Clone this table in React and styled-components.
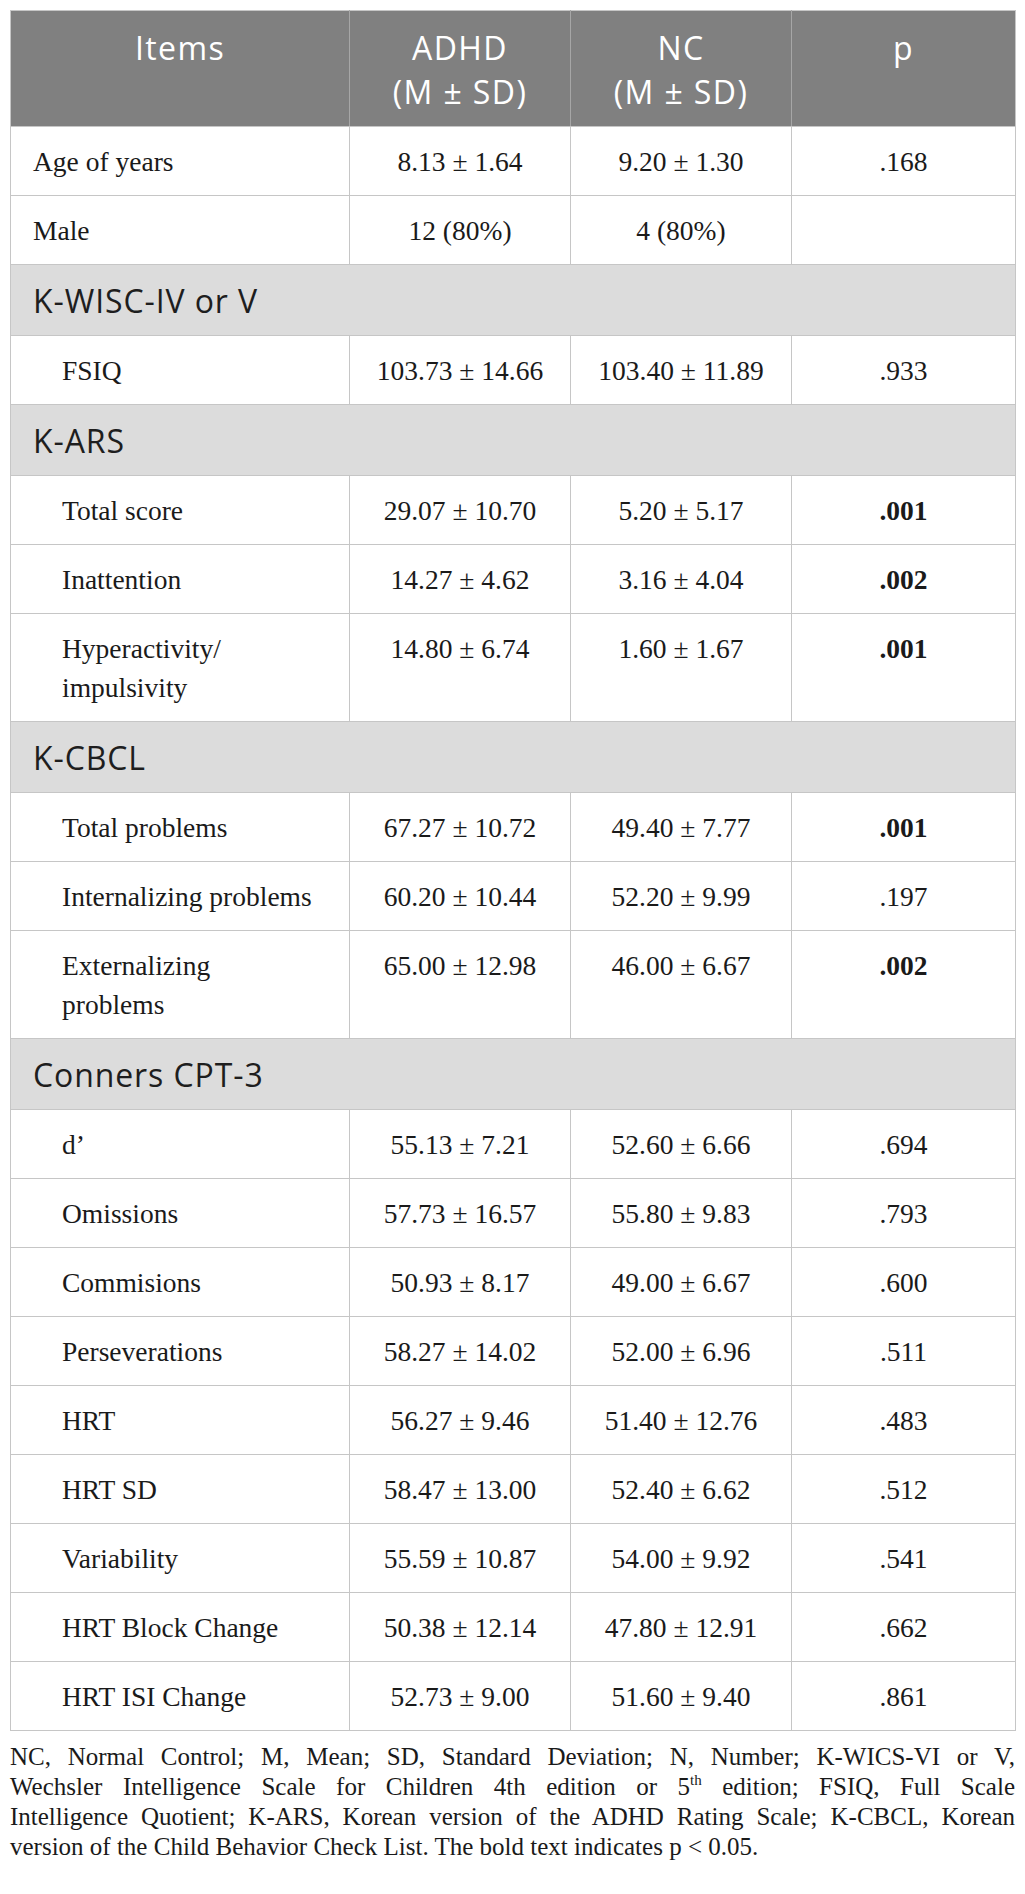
import React from 'react';
import styled, { createGlobalStyle } from 'styled-components';

const GlobalStyle = createGlobalStyle`
  html, body {
    margin: 0;
    padding: 0;
    background: #ffffff;
  }
`;

const Page = styled.div`
  padding: 10px 10px 20px 10px;
  box-sizing: border-box;
  width: 1025px;
`;

const Table = styled.table`
  width: 1005px;
  border-collapse: collapse;
  table-layout: fixed;
  border: 1px solid #c6c6c6;
`;

const HeadCell = styled.th`
  background: #808080;
  color: #ffffff;
  font-family: "Open Sans", "Noto Sans", sans-serif;
  font-weight: 400;
  font-size: 32px;
  letter-spacing: 1.4px;
  line-height: 44px;
  text-align: center;
  vertical-align: top;
  padding: 15px 4px 12px 4px;
  border-left: 1px solid #a6a6a6;
  border-bottom: 1px solid #c6c6c6;
  &:first-child {
    border-left: none;
  }
`;

const SectionCell = styled.td`
  background: #dcdcdc;
  color: #1e1e1e;
  font-family: "Open Sans", "Noto Sans", sans-serif;
  font-size: 32px;
  letter-spacing: 0.9px;
  line-height: 44px;
  padding: 14px 22px 12px 22px;
  border: 1px solid #c6c6c6;
`;

const Cell = styled.td`
  color: #1a1a1a;
  font-family: "Liberation Serif", "Times New Roman", serif;
  font-size: 27.5px;
  line-height: 39px;
  vertical-align: top;
  text-align: ${p => (p.$label ? 'left' : 'center')};
  font-weight: ${p => (p.$bold ? 700 : 400)};
  padding: 15px 6px 14px ${p => (p.$label ? (p.$indent ? '51px' : '22px') : '6px')};
  border: 1px solid #c6c6c6;
`;

const Note = styled.div`
  margin-top: 11px;
  width: 1005px;
  font-family: "Liberation Serif", "Times New Roman", serif;
  font-size: 25px;
  line-height: 30px;
  color: #1a1a1a;
`;

const NoteLine = styled.span`
  display: block;
  text-align: justify;
  text-align-last: ${p => (p.$last ? 'left' : 'justify')};
`;

const Sup = styled.sup`
  font-size: 15px;
  line-height: 0;
  vertical-align: 10px;
`;

const sections = [
  {
    rows: [
      { label: 'Age of years', adhd: '8.13 ± 1.64', nc: '9.20 ± 1.30', p: '.168' },
      { label: 'Male', adhd: '12 (80%)', nc: '4 (80%)', p: '' },
    ],
  },
  {
    title: 'K-WISC-IV or V',
    rows: [{ label: 'FSIQ', adhd: '103.73 ± 14.66', nc: '103.40 ± 11.89', p: '.933' }],
  },
  {
    title: 'K-ARS',
    rows: [
      { label: 'Total score', adhd: '29.07 ± 10.70', nc: '5.20 ± 5.17', p: '.001', bold: true },
      { label: 'Inattention', adhd: '14.27 ± 4.62', nc: '3.16 ± 4.04', p: '.002', bold: true },
      { label: ['Hyperactivity/', 'impulsivity'], adhd: '14.80 ± 6.74', nc: '1.60 ± 1.67', p: '.001', bold: true },
    ],
  },
  {
    title: 'K-CBCL',
    rows: [
      { label: 'Total problems', adhd: '67.27 ± 10.72', nc: '49.40 ± 7.77', p: '.001', bold: true },
      { label: 'Internalizing problems', adhd: '60.20 ± 10.44', nc: '52.20 ± 9.99', p: '.197' },
      { label: ['Externalizing', 'problems'], adhd: '65.00 ± 12.98', nc: '46.00 ± 6.67', p: '.002', bold: true },
    ],
  },
  {
    title: 'Conners CPT-3',
    rows: [
      { label: 'd’', adhd: '55.13 ± 7.21', nc: '52.60 ± 6.66', p: '.694' },
      { label: 'Omissions', adhd: '57.73 ± 16.57', nc: '55.80 ± 9.83', p: '.793' },
      { label: 'Commisions', adhd: '50.93 ± 8.17', nc: '49.00 ± 6.67', p: '.600' },
      { label: 'Perseverations', adhd: '58.27 ± 14.02', nc: '52.00 ± 6.96', p: '.511' },
      { label: 'HRT', adhd: '56.27 ± 9.46', nc: '51.40 ± 12.76', p: '.483' },
      { label: 'HRT SD', adhd: '58.47 ± 13.00', nc: '52.40 ± 6.62', p: '.512' },
      { label: 'Variability', adhd: '55.59 ± 10.87', nc: '54.00 ± 9.92', p: '.541' },
      { label: 'HRT Block Change', adhd: '50.38 ± 12.14', nc: '47.80 ± 12.91', p: '.662' },
      { label: 'HRT ISI Change', adhd: '52.73 ± 9.00', nc: '51.60 ± 9.40', p: '.861' },
    ],
  },
];

const renderLabel = label =>
  Array.isArray(label)
    ? label.map((l, i) => (
        <React.Fragment key={i}>
          {i > 0 && <br />}
          {l}
        </React.Fragment>
      ))
    : label;

export default function App() {
  return (
    <Page>
      <GlobalStyle />
      <Table>
        <colgroup>
          <col style={{ width: '339px' }} />
          <col style={{ width: '221px' }} />
          <col style={{ width: '221px' }} />
          <col style={{ width: '224px' }} />
        </colgroup>
        <thead>
          <tr>
            <HeadCell>Items</HeadCell>
            <HeadCell>
              ADHD
              <br />
              (M ± SD)
            </HeadCell>
            <HeadCell>
              NC
              <br />
              (M ± SD)
            </HeadCell>
            <HeadCell>p</HeadCell>
          </tr>
        </thead>
        <tbody>
          {sections.map((section, si) => (
            <React.Fragment key={si}>
              {section.title && (
                <tr>
                  <SectionCell colSpan={4}>{section.title}</SectionCell>
                </tr>
              )}
              {section.rows.map((row, ri) => (
                <tr key={ri}>
                  <Cell $label $indent={!!section.title}>
                    {renderLabel(row.label)}
                  </Cell>
                  <Cell>{row.adhd}</Cell>
                  <Cell>{row.nc}</Cell>
                  <Cell $bold={row.bold}>{row.p}</Cell>
                </tr>
              ))}
            </React.Fragment>
          ))}
        </tbody>
      </Table>
      <Note>
        <NoteLine>
          NC, Normal Control; M, Mean; SD, Standard Deviation; N, Number; K-WICS-VI or V,
        </NoteLine>
        <NoteLine>
          Wechsler Intelligence Scale for Children 4th edition or 5<Sup>th</Sup> edition; FSIQ, Full Scale
        </NoteLine>
        <NoteLine>
          Intelligence Quotient; K-ARS, Korean version of the ADHD Rating Scale; K-CBCL, Korean
        </NoteLine>
        <NoteLine $last>
          version of the Child Behavior Check List. The bold text indicates p &lt; 0.05.
        </NoteLine>
      </Note>
    </Page>
  );
}
